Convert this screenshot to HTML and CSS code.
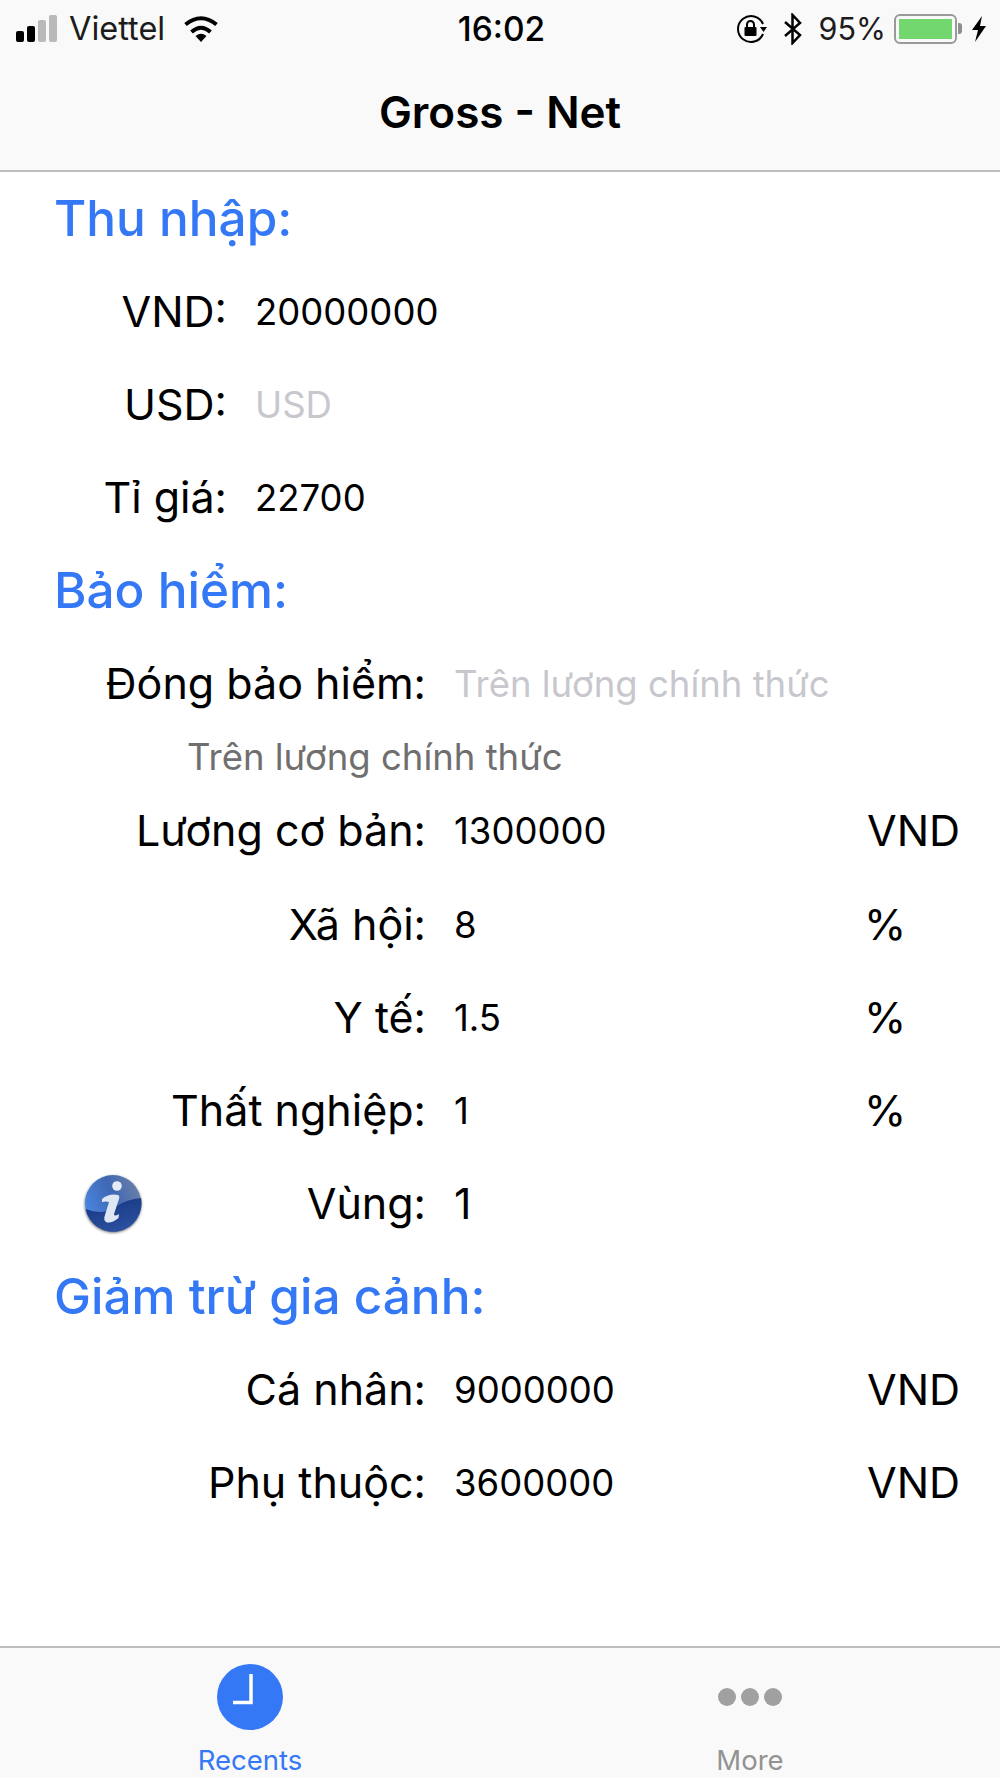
FILE: index.html
```html
<!DOCTYPE html>
<html lang="vi">
  <head>
    <meta charset="UTF-8" />
    <meta name="viewport" content="width=device-width, initial-scale=1.0" />
    <title>Gross - Net</title>
    <link rel="stylesheet" href="styles.css">
  </head>
  <body>
    <div id="app">
      <header class="top-bar">
        <div class="status-bar">
          <div class="status-left">
            <span class="signal"><i class="on h1"></i><i class="on h2"></i><i class="h3"></i><i class="h4"></i></span>
            <span class="carrier">Viettel</span>
            <svg class="wifi" width="38" height="28" viewBox="0 0 38 28">
              <path d="M19 27 L13.5 21 Q19 16.5 24.500 21 Z" fill="#000"/>
              <path d="M9.500 17 Q19 8.500 28.500 17" fill="none" stroke="#000" stroke-width="4"/>
              <path d="M3.500 9.500 Q19 -3 34.500 9.500" fill="none" stroke="#000" stroke-width="4"/>
            </svg>
          </div>
          <div class="status-time">16:02</div>
          <div class="status-right">
            <svg class="lock" width="32" height="30" viewBox="0 0 32 30">
              <path d="M27 10 A13 13 0 1 0 27 20" fill="none" stroke="#000" stroke-width="2"/>
              <path d="M24 13 L31 13 L27.500 18 Z" fill="#000"/>
              <rect x="8.500" y="13" width="12" height="9" rx="1" fill="#000"/>
              <path d="M11 13 V10.500 A3.500 3.500 0 0 1 18 10.500 V13" fill="none" stroke="#000" stroke-width="2"/>
            </svg>
            <svg class="bt" width="20" height="32" viewBox="0 0 20 32">
              <path d="M2 9 L17 22 L9.500 30 V2 L17 10 L2 23" fill="none" stroke="#000" stroke-width="2.500"/>
            </svg>
            <span class="percent">95%</span>
            <span class="battery"><span class="battery-fill"></span></span>
            <span class="battery-tip"></span>
            <svg class="bolt" width="16" height="26" viewBox="0 0 16 26">
              <path d="M11 0 L1 14 H7 L4 26 L15 10 H9 Z" fill="#000"/>
            </svg>
          </div>
        </div>
        <h1 class="nav-title">Gross - Net</h1>
      </header>

      <main class="form">
        <h2 class="section-title">Thu nhập:</h2>
        <div class="row row-short"><span class="label">VND:</span><span class="value">20000000</span></div>
        <div class="row row-short"><span class="label">USD:</span><span class="value placeholder">USD</span></div>
        <div class="row row-short"><span class="label">Tỉ giá:</span><span class="value">22700</span></div>

        <h2 class="section-title">Bảo hiểm:</h2>
        <div class="row"><span class="label">Đóng bảo hiểm:</span><span class="value placeholder">Trên lương chính thức</span></div>
        <p class="note">Trên lương chính thức</p>
        <div class="row row-after-note"><span class="label">Lương cơ bản:</span><span class="value">1300000</span><span class="unit">VND</span></div>
        <div class="row"><span class="label">Xã hội:</span><span class="value">8</span><span class="unit unit-percent">%</span></div>
        <div class="row"><span class="label">Y tế:</span><span class="value">1.5</span><span class="unit unit-percent">%</span></div>
        <div class="row"><span class="label">Thất nghiệp:</span><span class="value">1</span><span class="unit unit-percent">%</span></div>
        <div class="row">
          <span class="label label-info">
            <svg class="info-icon" width="64" height="64" viewBox="0 0 64 64">
              <defs>
                <linearGradient id="info-top" x1="0" y1="0.6" x2="1" y2="0.2">
                  <stop offset="0" stop-color="#4a86e0"/>
                  <stop offset="0.5" stop-color="#3f68b4"/>
                  <stop offset="1" stop-color="#6f80a8"/>
                </linearGradient>
                <linearGradient id="info-bottom" x1="0" y1="0" x2="0.4" y2="1">
                  <stop offset="0" stop-color="#16357f"/>
                  <stop offset="1" stop-color="#2a4f9e"/>
                </linearGradient>
                <filter id="info-shadow" x="-20%" y="-20%" width="140%" height="140%">
                  <feDropShadow dx="0" dy="1.500" stdDeviation="1.800" flood-color="#000" flood-opacity="0.7"/>
                </filter>
              </defs>
              <circle cx="32" cy="32" r="28" fill="url(#info-top)" filter="url(#info-shadow)"/>
              <path d="M4.500 38 Q22 45 34 36 Q46 28 60 27 A28 28 0 0 1 4.500 38 Z" fill="url(#info-bottom)"/>
              <circle cx="36" cy="15" r="4.800" fill="#e6ecf5"/>
              <path d="M21 28 Q28 22 37 24 Q39 25 38 28 L33 43 Q33 46 38 43 L37.500 47 Q30 53 25 51 Q22 49 24 44 L28 31 Q25 30 21 31 Z" fill="#dfe7f3"/>
            </svg>
            Vùng:
          </span>
          <span class="value value-big">1</span>
        </div>

        <h2 class="section-title">Giảm trừ gia cảnh:</h2>
        <div class="row"><span class="label">Cá nhân:</span><span class="value">9000000</span><span class="unit">VND</span></div>
        <div class="row"><span class="label">Phụ thuộc:</span><span class="value">3600000</span><span class="unit">VND</span></div>
      </main>

      <nav class="tab-bar">
        <div class="tab tab-active">
          <span class="tab-icon">
            <svg width="66" height="66" viewBox="0 0 66 66">
              <circle cx="33" cy="33" r="33" fill="#3478f6"/>
              <path d="M34 10 V38.500 H16" fill="none" stroke="#fff" stroke-width="3.500"/>
            </svg>
          </span>
          <span class="tab-label">Recents</span>
        </div>
        <div class="tab">
          <span class="tab-icon dots"><i></i><i></i><i></i></span>
          <span class="tab-label">More</span>
        </div>
      </nav>
    </div>
  </body>
</html>
```

FILE: styles.css
```css
* {
  margin: 0;
  padding: 0;
  box-sizing: border-box;
}

body {
  background-color: #fff;
  font-family: Inter, "Liberation Sans", sans-serif;
  color: #000;
}

#app {
  width: 1000px;
  height: 1778px;
  display: flex;
  flex-direction: column;
}

/* top */
.top-bar {
  height: 172px;
  background-color: #f9f9f9;
  border-bottom: 2px solid #bdbdbd;
}

.status-bar {
  height: 57px;
  display: grid;
  grid-template-columns: 1fr auto 1fr;
  align-items: center;
  padding: 0 13px 0 16px;
}

.status-left,
.status-right {
  display: flex;
  align-items: center;
}

.status-right {
  justify-content: flex-end;
}

.signal {
  display: flex;
  align-items: flex-end;
  gap: 3px;
  height: 27px;
}

.signal i {
  width: 8px;
  background-color: #b9b9b9;
  border-radius: 2px;
}

.signal .on {
  background-color: #000;
}

.h1 { height: 11px; }
.h2 { height: 16px; }
.h3 { height: 22px; }
.h4 { height: 27px; }

.carrier {
  margin-left: 12px;
  font-size: 32.500px;
  color: #1c1c1c;
}

.wifi {
  margin-left: 17px;
}

.status-time {
  font-size: 33.500px;
  font-weight: 500;
}

.lock {
  margin-right: 15px;
}

.bt {
  margin-right: 16px;
}

.percent {
  font-size: 30.500px;
  color: #1c1c1c;
  margin-right: 8px;
}

.battery {
  width: 63px;
  height: 30px;
  border: 2px solid #9a9a9a;
  border-radius: 6px;
  padding: 3px;
  display: flex;
}

.battery-fill {
  width: 53px;
  background-color: #72d76f;
}

.battery-tip {
  width: 4px;
  height: 11px;
  margin-left: 1px;
  background-color: #8e8e8e;
  border-radius: 0 3px 3px 0;
}

.bolt {
  margin-left: 9px;
}

.nav-title {
  height: 113px;
  padding-bottom: 4px;
  display: flex;
  justify-content: center;
  align-items: center;
  font-size: 44px;
  font-weight: 600;
}

/* form */
.form {
  flex: 1;
  display: flex;
  flex-direction: column;
}

.section-title {
  height: 93px;
  padding-left: 54px;
  display: flex;
  align-items: center;
  font-size: 49.500px;
  font-weight: 500;
  color: #3478f6;
}

.form > .section-title:first-child {
  height: 92px;
}

.row {
  height: 93px;
  display: grid;
  grid-template-columns: 426px 441px 1fr;
  align-items: center;
  font-size: 43px;
}

.row-short {
  grid-template-columns: 227px 1fr;
}

.label {
  text-align: right;
}

.label-info {
  display: flex;
  align-items: center;
  justify-content: space-between;
  padding-left: 81px;
}

.value {
  padding-top: 2px;
  padding-left: 28px;
  font-size: 36.500px;
}

.value-big {
  padding-top: 0;
  font-size: 43px;
}

.placeholder {
  color: #c7c7cd;
}

.unit-percent {
  margin-left: -3px;
}

.note {
  height: 51px;
  margin-top: 2px;
  padding-left: 187px;
  font-size: 36.500px;
  color: #6f6f6f;
  display: flex;
  align-items: center;
}

.row-after-note {
  height: 95px;
}

/* bottom */
.tab-bar {
  height: 132px;
  background-color: #f9f9f9;
  border-top: 2px solid #bdbdbd;
  display: grid;
  grid-template-columns: 500px 500px;
}

.tab {
  display: flex;
  flex-direction: column;
  align-items: center;
  padding-top: 16px;
  color: #929292;
}

.tab-active {
  color: #3478f6;
}

.tab-icon {
  height: 66px;
  display: flex;
  align-items: center;
  justify-content: center;
}

.tab-label {
  margin-top: 14px;
  font-size: 27.500px;
  line-height: 32px;
}

.dots {
  gap: 5px;
}

.dots i {
  width: 18px;
  height: 18px;
  border-radius: 50%;
  background-color: #a0a0a0;
}
```
